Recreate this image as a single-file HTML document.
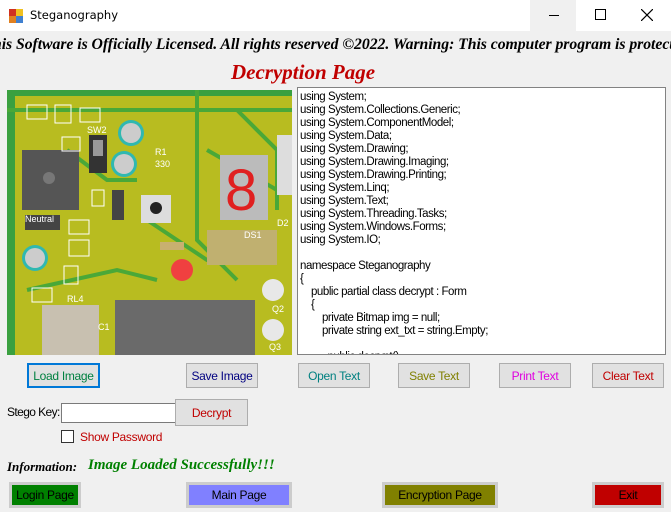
<!DOCTYPE html>
<html><head><meta charset="utf-8"><style>
*{margin:0;padding:0;box-sizing:border-box}
body{width:671px;height:512px;background:#f0f0f0;position:relative;overflow:hidden;font-family:"Liberation Sans",Arial,sans-serif;font-size:12px}
.a{position:absolute}
.btn{position:absolute;background:#e1e1e1;border:1px solid #adadad;font-size:12px;display:flex;align-items:center;justify-content:center;letter-spacing:-0.3px}
.code{font-size:11.5px;line-height:13px;color:#000;white-space:pre;letter-spacing:-0.45px}
</style></head><body>
<div class="a" style="left:0;top:0;width:671px;height:31px;background:#fff"></div>
<svg class="a" style="left:9px;top:9px" width="14" height="14"><rect x="0" y="0" width="7" height="7" fill="#d03020"/><rect x="7" y="0" width="7" height="7" fill="#f0c020"/><rect x="0" y="7" width="7" height="7" fill="#e08020"/><rect x="7" y="7" width="7" height="7" fill="#4080d0"/></svg>
<div class="a" style="left:30px;top:8px;font-family:'DejaVu Sans',sans-serif;font-size:11.5px">Steganography</div>
<div class="a" style="left:530px;top:0;width:46px;height:31px;background:#f0f0f0"></div>
<div class="a" style="left:549px;top:15px;width:10px;height:1px;background:#000"></div>
<div class="a" style="left:595px;top:9px;width:11px;height:11px;border:1px solid #000"></div>
<svg class="a" style="left:641px;top:9px" width="12" height="12"><path d="M0 0L12 12M12 0L0 12" stroke="#000" stroke-width="1.2"/></svg>
<div class="a" style="left:-7px;top:36px;white-space:nowrap;font-family:'Liberation Serif',serif;font-style:italic;font-weight:bold;font-size:15.75px;letter-spacing:-0.05px">his Software is Officially Licensed. All rights reserved ©2022. Warning: This computer program is protected</div>
<div class="a" style="left:231px;top:60px;font-family:'Liberation Serif',serif;font-style:italic;font-weight:bold;font-size:21px;color:#c00000">Decryption Page</div>

<svg class="a" style="left:7px;top:90px" width="285" height="265" viewBox="0 0 285 265">
<rect width="285" height="265" fill="#b8bc20"/>
<rect x="0" y="0" width="285" height="6" fill="#3aa040"/>
<rect x="0" y="0" width="8" height="265" fill="#3aa040"/>
<g stroke="#4aa838" stroke-width="4" fill="none">
<path d="M0 20H285"/><path d="M60 60L100 90L130 90"/><path d="M140 130L200 170L220 170"/><path d="M190 0V150L230 190"/><path d="M20 200L110 180L150 190"/><path d="M200 60L270 100"/><path d="M230 20L270 60V120"/></g>
<rect x="15" y="60" width="57" height="60" fill="#555"/><circle cx="42" cy="88" r="6" fill="#777"/>
<rect x="82" y="45" width="18" height="38" fill="#333"/><rect x="86" y="50" width="10" height="16" fill="#999"/>
<circle cx="124" cy="43" r="13" fill="#30b8b0"/><circle cx="124" cy="43" r="10" fill="#ccc"/>
<circle cx="117" cy="74" r="13" fill="#30b8b0"/><circle cx="117" cy="74" r="10" fill="#ccc"/>
<circle cx="28" cy="168" r="13" fill="#30b8b0"/><circle cx="28" cy="168" r="10" fill="#ccc"/>
<rect x="105" y="100" width="12" height="30" fill="#444"/>
<rect x="134" y="105" width="30" height="28" fill="#ddd"/><circle cx="149" cy="118" r="6" fill="#222"/>
<rect x="213" y="65" width="48" height="65" fill="#bbb"/><text x="218" y="120" font-size="58" fill="#e02020" font-family="Liberation Sans">8</text>
<rect x="200" y="140" width="70" height="35" fill="#c0b070"/>
<rect x="153" y="152" width="24" height="8" fill="#c8b070"/>
<circle cx="175" cy="180" r="11" fill="#f04040"/>
<rect x="35" y="215" width="57" height="50" fill="#c8c0b0"/>
<rect x="108" y="210" width="140" height="55" fill="#6a6a6a"/>
<circle cx="266" cy="200" r="11" fill="#e8e8e8"/><circle cx="266" cy="240" r="11" fill="#e8e8e8"/>
<rect x="270" y="45" width="15" height="60" fill="#ddd"/>
<rect x="18" y="125" width="35" height="15" fill="#444"/>
<g fill="none" stroke="#fff" stroke-width="1"><rect x="20" y="15" width="20" height="14"/><rect x="48" y="15" width="16" height="18"/><rect x="73" y="18" width="20" height="14"/><rect x="55" y="47" width="18" height="14"/><rect x="85" y="100" width="12" height="16"/><rect x="62" y="130" width="20" height="14"/><rect x="62" y="150" width="20" height="16"/><rect x="57" y="176" width="14" height="18"/><rect x="25" y="198" width="20" height="14"/></g>
<g fill="#fff" font-size="9" font-family="Liberation Sans"><text x="148" y="65">R1</text><text x="148" y="77">330</text><text x="80" y="43">SW2</text><text x="237" y="148">DS1</text><text x="60" y="212">RL4</text><text x="91" y="240">C1</text><text x="265" y="222">Q2</text><text x="262" y="260">Q3</text><text x="18" y="132">Neutral</text><text x="270" y="136">D2</text></g>
</svg>

<div class="a" style="left:297px;top:87px;width:369px;height:268px;background:#fff;border:1px solid #828282;overflow:hidden">
<div class="code" style="padding:3px 0 0 2px">using System;
using System.Collections.Generic;
using System.ComponentModel;
using System.Data;
using System.Drawing;
using System.Drawing.Imaging;
using System.Drawing.Printing;
using System.Linq;
using System.Text;
using System.Threading.Tasks;
using System.Windows.Forms;
using System.IO;

namespace Steganography
{
    public partial class decrypt : Form
    {
        private Bitmap img = null;
        private string ext_txt = string.Empty;

          public decrypt()</div></div>

<div class="btn" style="left:27px;top:363px;width:73px;height:25px;border:2px solid #0078d7;color:#008040">Load Image</div>
<div class="btn" style="left:186px;top:363px;width:72px;height:25px;color:#000080">Save Image</div>
<div class="btn" style="left:298px;top:363px;width:72px;height:25px;color:#008080">Open Text</div>
<div class="btn" style="left:398px;top:363px;width:72px;height:25px;color:#808000">Save Text</div>
<div class="btn" style="left:499px;top:363px;width:72px;height:25px;color:#e000e0">Print Text</div>
<div class="btn" style="left:592px;top:363px;width:72px;height:25px;color:#c00000">Clear Text</div>

<div class="a" style="left:7px;top:405px;letter-spacing:-0.6px">Stego Key:</div>
<div class="a" style="left:61px;top:403px;width:116px;height:20px;background:#fff;border:1px solid #7a7a7a"></div>
<div class="btn" style="left:175px;top:399px;width:73px;height:27px;color:#c00000">Decrypt</div>
<div class="a" style="left:61px;top:430px;width:13px;height:13px;background:#fff;border:1px solid #333"></div>
<div class="a" style="left:80px;top:430px;color:#c00000;letter-spacing:-0.3px">Show Password</div>

<div class="a" style="left:7px;top:459px;font-family:'Liberation Serif',serif;font-style:italic;font-weight:bold;font-size:13px">Information:</div>
<div class="a" style="left:88px;top:457px;font-family:'Liberation Serif',serif;font-style:italic;font-weight:bold;font-size:15px;color:#008000">Image Loaded Successfully!!!</div>

<div class="btn" style="left:9px;top:482px;width:72px;height:26px;background:#008000;border:3px solid #ccc;color:#000">Login Page</div>
<div class="btn" style="left:186px;top:482px;width:106px;height:26px;background:#8080ff;border:3px solid #ccc;color:#000">Main Page</div>
<div class="btn" style="left:382px;top:482px;width:116px;height:26px;background:#808000;border:3px solid #ccc;color:#000">Encryption Page</div>
<div class="btn" style="left:592px;top:482px;width:72px;height:26px;background:#c00000;border:3px solid #ccc;color:#000">Exit</div>
</body></html>
